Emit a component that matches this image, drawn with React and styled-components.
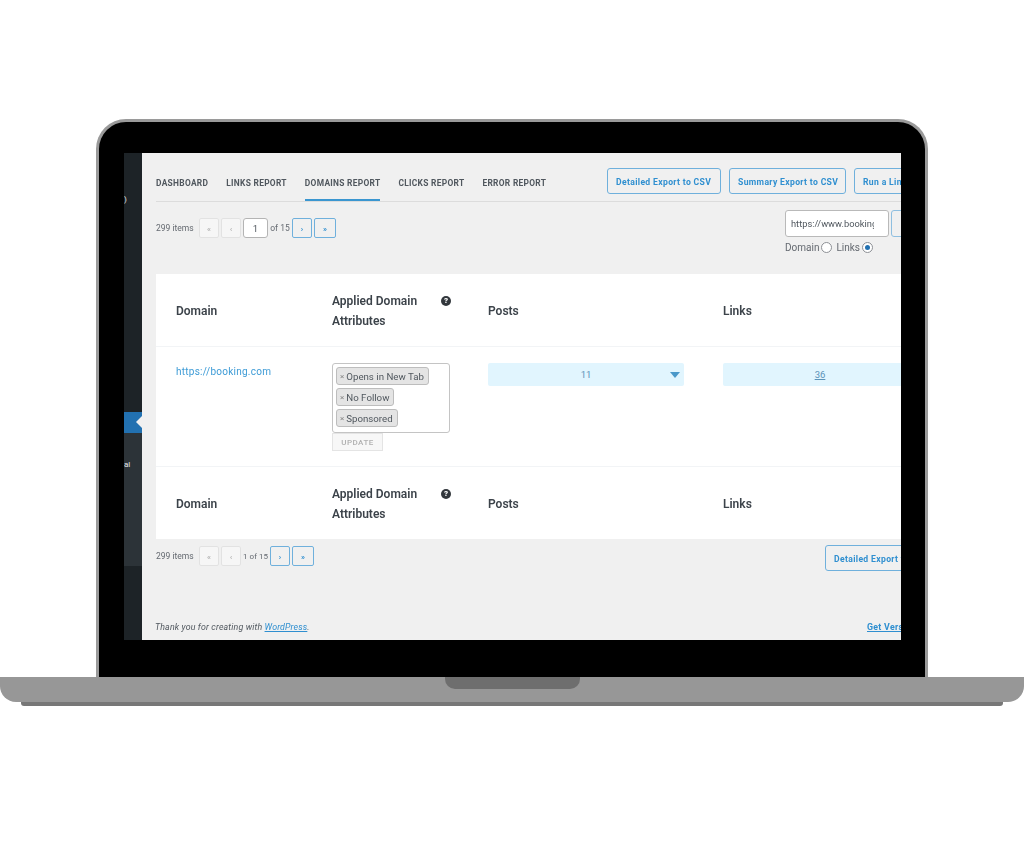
import React from "react";
import styled, { createGlobalStyle } from "styled-components";

const GlobalStyle = createGlobalStyle`
    html, body {
        margin: 0;
        padding: 0;
        background: #fff;
    }
    * {
        box-sizing: border-box;
    }
`;

function Pager({ current, bottom }) {
    return (
        <PagerRow $bottom={bottom}>
            <ItemCount>299 items</ItemCount>
            <PageBtn>«</PageBtn>
            <PageBtn>‹</PageBtn>
            {bottom ? (
                <PageText $bottom>1 of 15</PageText>
            ) : (
                <>
                    <PageInput>{current}</PageInput>
                    <PageText>of 15</PageText>
                </>
            )}
            <PageBtn $active>›</PageBtn>
            <PageBtn $active $wide>»</PageBtn>
        </PagerRow>
    );
}

function HeadRow({ bottom }) {
    return (
        <Row $head $bottom={bottom}>
            <HeadCell $bottom={bottom}>Domain</HeadCell>
            <HeadCell $bottom={bottom}>
                <AppliedTitle>Applied Domain Attributes</AppliedTitle>
                <HelpIcon>?</HelpIcon>
            </HeadCell>
            <HeadCell $bottom={bottom}>Posts</HeadCell>
            <HeadCell $bottom={bottom}>Links</HeadCell>
        </Row>
    );
}

export default function App() {
    return (
        <Page>
            <GlobalStyle />
            <Lid>
                <Screen>
                    <Sidebar>
                        <MenuBlock $h={259} $bg="#1d2327">
                            <MenuGlyph $top={42}>)</MenuGlyph>
                        </MenuBlock>
                        <MenuActive />
                        <MenuBlock $h={133} $bg="#2c3338">
                            <MenuGlyph $top={27}>al</MenuGlyph>
                        </MenuBlock>
                        <MenuBlock $h={74} $bg="#1d2327" />
                    </Sidebar>
                    <Main>
                        <Inner>
                            <TabBar>
                                <Tabs>
                                    <Tab>Dashboard</Tab>
                                    <Tab>Links Report</Tab>
                                    <Tab $active>Domains Report</Tab>
                                    <Tab>Clicks Report</Tab>
                                    <Tab>Error Report</Tab>
                                </Tabs>
                                <ExportBtn $w={114}>Detailed Export to CSV</ExportBtn>
                                <ExportBtn $w={117}>Summary Export to CSV</ExportBtn>
                                <ExportBtn $w={130}>Run a Link Scan</ExportBtn>
                            </TabBar>
                            <ToolRow>
                                <Pager current="1" />
                                <SearchBlock>
                                    <SearchTop>
                                        <SearchInput>
                                            <SearchValue>https://www.booking.com</SearchValue>
                                        </SearchInput>
                                        <SearchBtn>Search</SearchBtn>
                                    </SearchTop>
                                    <RadioRow>
                                        <RadioLabel>Domain</RadioLabel>
                                        <Radio />
                                        <RadioLabel $gap>Links</RadioLabel>
                                        <Radio $checked />
                                    </RadioRow>
                                </SearchBlock>
                            </ToolRow>
                            <Table>
                                <HeadRow />
                                <Row>
                                    <DomainLink>https://booking.com</DomainLink>
                                    <AttrCell>
                                        <TagBox>
                                            <Tag><TagX>×</TagX>Opens in New Tab</Tag>
                                            <Tag><TagX>×</TagX>No Follow</Tag>
                                            <Tag><TagX>×</TagX>Sponsored</Tag>
                                        </TagBox>
                                        <UpdateBtn>UPDATE</UpdateBtn>
                                    </AttrCell>
                                    <CountBar $w={196}>
                                        11
                                        <Caret />
                                    </CountBar>
                                    <CountBar $w={194}><u>36</u></CountBar>
                                </Row>
                                <HeadRow bottom />
                            </Table>
                            <BottomRow>
                                <Pager bottom />
                                <ExportBtn $w={130}>Detailed Export to CSV</ExportBtn>
                            </BottomRow>
                            <FooterRow>
                                <Thanks>Thank you for creating with <a>WordPress</a>.</Thanks>
                                <Version>Get Version 6.4</Version>
                            </FooterRow>
                        </Inner>
                    </Main>
                </Screen>
            </Lid>
            <Base>
                <Notch />
            </Base>
            <BaseLip />
        </Page>
    );
}

const FONT = `"Roboto", "Liberation Sans", sans-serif`;

const Page = styled.div`
    width: 1024px;
    height: 858px;
    padding-top: 119px;
    overflow: hidden;
    display: flex;
    flex-direction: column;
    font-family: ${FONT};
    background: #fff;
`;
const Lid = styled.div`
    width: 832px;
    height: 558px;
    margin-left: 96px;
    padding: 31px 24px 34px 25px;
    background: #000;
    border: 3px solid #9a9a9a;
    border-bottom: none;
    border-radius: 30px 30px 0 0;
`;
const Screen = styled.div`
    width: 777px;
    height: 487px;
    display: flex;
    overflow: hidden;
`;
const Sidebar = styled.div`
    width: 18px;
    flex-shrink: 0;
    display: flex;
    flex-direction: column;
`;
const MenuBlock = styled.div`
    position: relative;
    height: ${(p) => p.$h}px;
    background: ${(p) => p.$bg};
`;
const MenuGlyph = styled.span`
    position: absolute;
    left: 0;
    top: ${(p) => p.$top}px;
    font-size: 8px;
    color: #e6e7e8;
`;
const MenuActive = styled.div`
    position: relative;
    height: 21px;
    background: #2271b1;

    &::after {
        content: "";
        position: absolute;
        right: 0;
        top: 4px;
        border: 6.5px solid transparent;
        border-right-color: #f0f0f0;
        border-left-width: 0;
    }
`;
const Main = styled.div`
    flex: 1;
    min-width: 0;
    overflow: hidden;
    background: #f0f0f0;
`;
const Inner = styled.div`
    width: 900px;
    padding-left: 14px;
    filter: blur(0.3px);
`;
const TabBar = styled.div`
    display: flex;
    align-items: flex-start;
    gap: 8px;
    height: 49px;
    padding-top: 15px;
    border-bottom: 1px solid #dcdcdc;
`;
const Tabs = styled.div`
    width: 443px;
    display: flex;
    gap: 18px;
`;
const Tab = styled.div`
    height: 33px;
    padding-top: 10px;
    font-size: 8.4px;
    font-weight: 700;
    letter-spacing: 0.3px;
    text-transform: uppercase;
    white-space: nowrap;
    color: #50575e;
    border-bottom: 2px solid ${(p) => (p.$active ? "#3a96d0" : "transparent")};
`;
const ExportBtn = styled.div`
    width: ${(p) => p.$w}px;
    height: 26px;
    flex-shrink: 0;
    display: flex;
    align-items: center;
    justify-content: flex-start;
    padding: 1px 0 0 8px;
    font-size: 8.6px;
    font-weight: 700;
    letter-spacing: 0.35px;
    white-space: nowrap;
    color: #2f8fd0;
    border: 1px solid #6fb0dc;
    border-radius: 3px;
    background: #f0f0f0;
`;
const ToolRow = styled.div`
    display: flex;
    align-items: flex-start;
    height: 72px;
    padding-top: 8px;
`;
const PagerRow = styled.div`
    width: ${(p) => (p.$bottom ? 669 : 629)}px;
    height: 20px;
    flex-shrink: 0;
    margin-top: ${(p) => (p.$bottom ? 1 : 8)}px;
    display: flex;
    align-items: center;
    gap: 2px;
    color: #646970;
    font-size: 8.5px;
`;
const ItemCount = styled.span`
    width: 41px;
    flex-shrink: 0;
    white-space: nowrap;
`;
const PageBtn = styled.div`
    width: ${(p) => (p.$wide ? 22 : 20)}px;
    height: 20px;
    padding-top: 1px;
    display: flex;
    align-items: center;
    justify-content: center;
    font-size: 8px;
    font-weight: 700;
    border-radius: 2px;
    color: ${(p) => (p.$active ? "#2f8fd0" : "#b5b5b5")};
    background: ${(p) => (p.$active ? "#f0f0f0" : "#f6f6f6")};
    border: 1px solid ${(p) => (p.$active ? "#6fb0dc" : "#e2e2e2")};
`;
const PageInput = styled.div`
    width: 25px;
    height: 20px;
    display: flex;
    align-items: center;
    justify-content: center;
    background: #fff;
    border: 1px solid #b4b4b4;
    border-radius: 3px;
    font-size: 9.5px;
    color: #50575e;
`;
const PageText = styled.span`
    width: ${(p) => (p.$bottom ? 25 : 20)}px;
    font-size: ${(p) => (p.$bottom ? 8 : 8.5)}px;
    text-align: center;
    white-space: nowrap;
`;
const SearchBlock = styled.div`
    width: 180px;
`;
const SearchTop = styled.div`
    display: flex;
    gap: 2px;
`;
const SearchInput = styled.div`
    width: 104px;
    height: 27px;
    padding: 0 14px 0 5px;
    display: flex;
    align-items: center;
    background: #fff;
    border: 1px solid #b9b9b9;
    border-radius: 3px;
`;
const SearchValue = styled.span`
    flex: 1;
    min-width: 0;
    overflow: hidden;
    font-size: 9.3px;
    color: #50575e;
    white-space: nowrap;
`;
const SearchBtn = styled.div`
    width: 60px;
    height: 27px;
    display: flex;
    align-items: center;
    justify-content: center;
    font-size: 8.5px;
    color: #a9c9df;
    border: 1px solid #8fbfe0;
    border-radius: 3px;
`;
const RadioRow = styled.div`
    display: flex;
    align-items: center;
    height: 14px;
    margin-top: 3px;
`;
const RadioLabel = styled.span`
    margin-left: ${(p) => (p.$gap ? 4 : 0)}px;
    margin-right: 2px;
    font-size: 10px;
    color: #646970;
`;
const Radio = styled.span`
    width: 11px;
    height: 11px;
    border-radius: 50%;
    background: #fff;
    border: 1px solid #8c8f94;
    display: flex;
    align-items: center;
    justify-content: center;

    &::before {
        content: "";
        width: 5px;
        height: 5px;
        border-radius: 50%;
        background: ${(p) => (p.$checked ? "#2271b1" : "transparent")};
    }
`;
const Table = styled.div`
    background: #fff;
`;
const Row = styled.div`
    display: grid;
    grid-template-columns: 156px 156px 235px 1fr;
    align-items: ${(p) => (p.$head ? "center" : "flex-start")};
    height: ${(p) => (p.$head ? (p.$bottom ? 72 : 73) : 120)}px;
    padding: ${(p) => (p.$head ? 0 : 16)}px 0 0 20px;
    border-bottom: ${(p) => (p.$bottom ? "none" : "1px solid #f2f4f6")};
`;
const HeadCell = styled.div`
    position: relative;
    display: flex;
    align-items: center;
    margin-top: ${(p) => (p.$bottom ? 1 : 2)}px;
    font-size: 12px;
    font-weight: 600;
    line-height: 20px;
    color: #3c434a;
`;
const AppliedTitle = styled.div`
    width: 92px;
`;
const HelpIcon = styled.span`
    position: absolute;
    left: 109px;
    top: 0;
    width: 10px;
    height: 10px;
    margin-top: 5px;
    border-radius: 50%;
    background: #32373c;
    color: #fff;
    font-size: 8px;
    font-weight: 900;
    line-height: 10px;
    text-align: center;
`;
const DomainLink = styled.a`
    padding-top: 3px;
    font-size: 10px;
    letter-spacing: 0.25px;
    color: #3d9bd6;
`;
const AttrCell = styled.div`
    display: flex;
    flex-direction: column;
    align-items: flex-start;
`;
const TagBox = styled.div`
    width: 118px;
    height: 70px;
    padding: 3px;
    display: flex;
    flex-direction: column;
    align-items: flex-start;
    gap: 3px;
    background: #fff;
    border: 1px solid #c4c4c4;
    border-radius: 3px;
`;
const Tag = styled.div`
    height: 18px;
    padding: 0 4px 0 3px;
    display: flex;
    align-items: center;
    font-size: 9.7px;
    white-space: nowrap;
    color: #50575e;
    background: #e4e4e4;
    border: 1px solid #bdbdbd;
    border-radius: 3px;
`;
const TagX = styled.span`
    margin-right: 2px;
    color: #888;
    font-size: 8px;
`;
const UpdateBtn = styled.div`
    width: 51px;
    height: 18px;
    display: flex;
    align-items: center;
    justify-content: center;
    font-size: 8px;
    font-weight: 500;
    letter-spacing: 0.5px;
    color: #b0b0b0;
    background: #f7f7f7;
    border: 1px solid #e4e4e4;
`;
const CountBar = styled.div`
    position: relative;
    width: ${(p) => p.$w}px;
    height: 23px;
    display: flex;
    align-items: center;
    justify-content: center;
    font-size: 9.5px;
    color: #5b93b8;
    background: #e1f5fe;
    border-radius: 2px;
`;
const Caret = styled.span`
    position: absolute;
    right: 4px;
    top: 9px;
    border-style: solid;
    border-width: 6px 5px 0;
    border-color: #4a98c9 transparent transparent;
`;
const BottomRow = styled.div`
    display: flex;
    align-items: flex-start;
    height: 80px;
    padding-top: 6px;
`;
const FooterRow = styled.div`
    display: flex;
    padding-top: 3px;
    margin-left: -1px;
`;
const Thanks = styled.div`
    width: 712px;
    font-size: 8.8px;
    font-style: italic;
    letter-spacing: 0.15px;
    color: #50575e;

    a {
        color: #2f8fd0;
        text-decoration: underline;
    }
`;
const Version = styled.div`
    flex-shrink: 0;
    font-size: 8.8px;
    font-weight: 700;
    letter-spacing: 0.3px;
    white-space: nowrap;
    color: #2f8fd0;
    text-decoration: underline;
`;
const Base = styled.div`
    width: 1024px;
    height: 25px;
    flex-shrink: 0;
    display: flex;
    justify-content: center;
    background: #979797;
    border-radius: 0 0 16px 16px;
`;
const Notch = styled.div`
    width: 135px;
    height: 12px;
    background: #6e6e6e;
    border-radius: 0 0 10px 10px;
`;
const BaseLip = styled.div`
    width: 982px;
    height: 4px;
    flex-shrink: 0;
    margin-left: 21px;
    background: #777;
    border-radius: 0 0 3px 3px;
`;
